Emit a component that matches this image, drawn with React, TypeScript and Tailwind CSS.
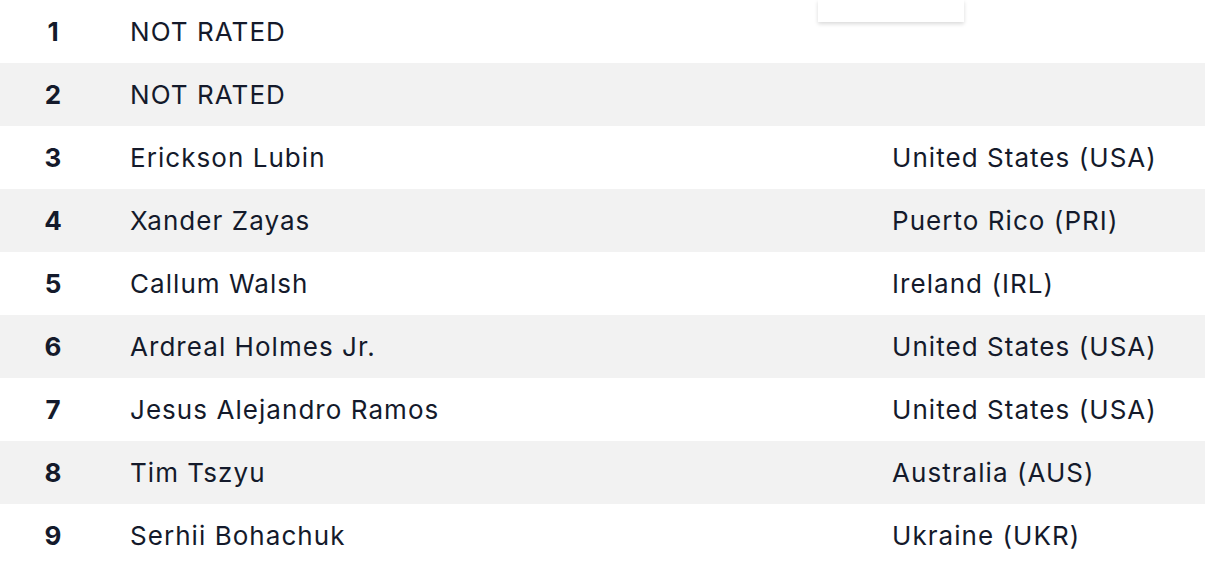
const rows = [
  { rank: 1, name: "NOT RATED", country: "" },
  { rank: 2, name: "NOT RATED", country: "" },
  { rank: 3, name: "Erickson Lubin", country: "United States (USA)" },
  { rank: 4, name: "Xander Zayas", country: "Puerto Rico (PRI)" },
  { rank: 5, name: "Callum Walsh", country: "Ireland (IRL)" },
  { rank: 6, name: "Ardreal Holmes Jr.", country: "United States (USA)" },
  { rank: 7, name: "Jesus Alejandro Ramos", country: "United States (USA)" },
  { rank: 8, name: "Tim Tszyu", country: "Australia (AUS)" },
  { rank: 9, name: "Serhii Bohachuk", country: "Ukraine (UKR)" },
];

export default function App() {
  return (
    <div className="relative w-[1205px] bg-white text-[#141a2b] font-['Inter',sans-serif] text-[26px]">
      {rows.map((r, i) => (
        <div
          key={r.rank}
          className={`flex h-[63px] items-center ${i % 2 === 1 ? "bg-[#f2f2f2]" : "bg-white"}`}
        >
          <div className="w-[106px] text-center font-bold">{r.rank}</div>
          <div className="w-[786px] pl-[24px] tracking-[1.05px]">{r.name}</div>
          <div className="flex-1 tracking-[1.05px]">{r.country}</div>
        </div>
      ))}
      <div className="absolute left-[818px] top-0 h-[22px] w-[146px] bg-white shadow-[0_2px_4px_rgba(0,0,0,0.15)]" />
    </div>
  );
}
